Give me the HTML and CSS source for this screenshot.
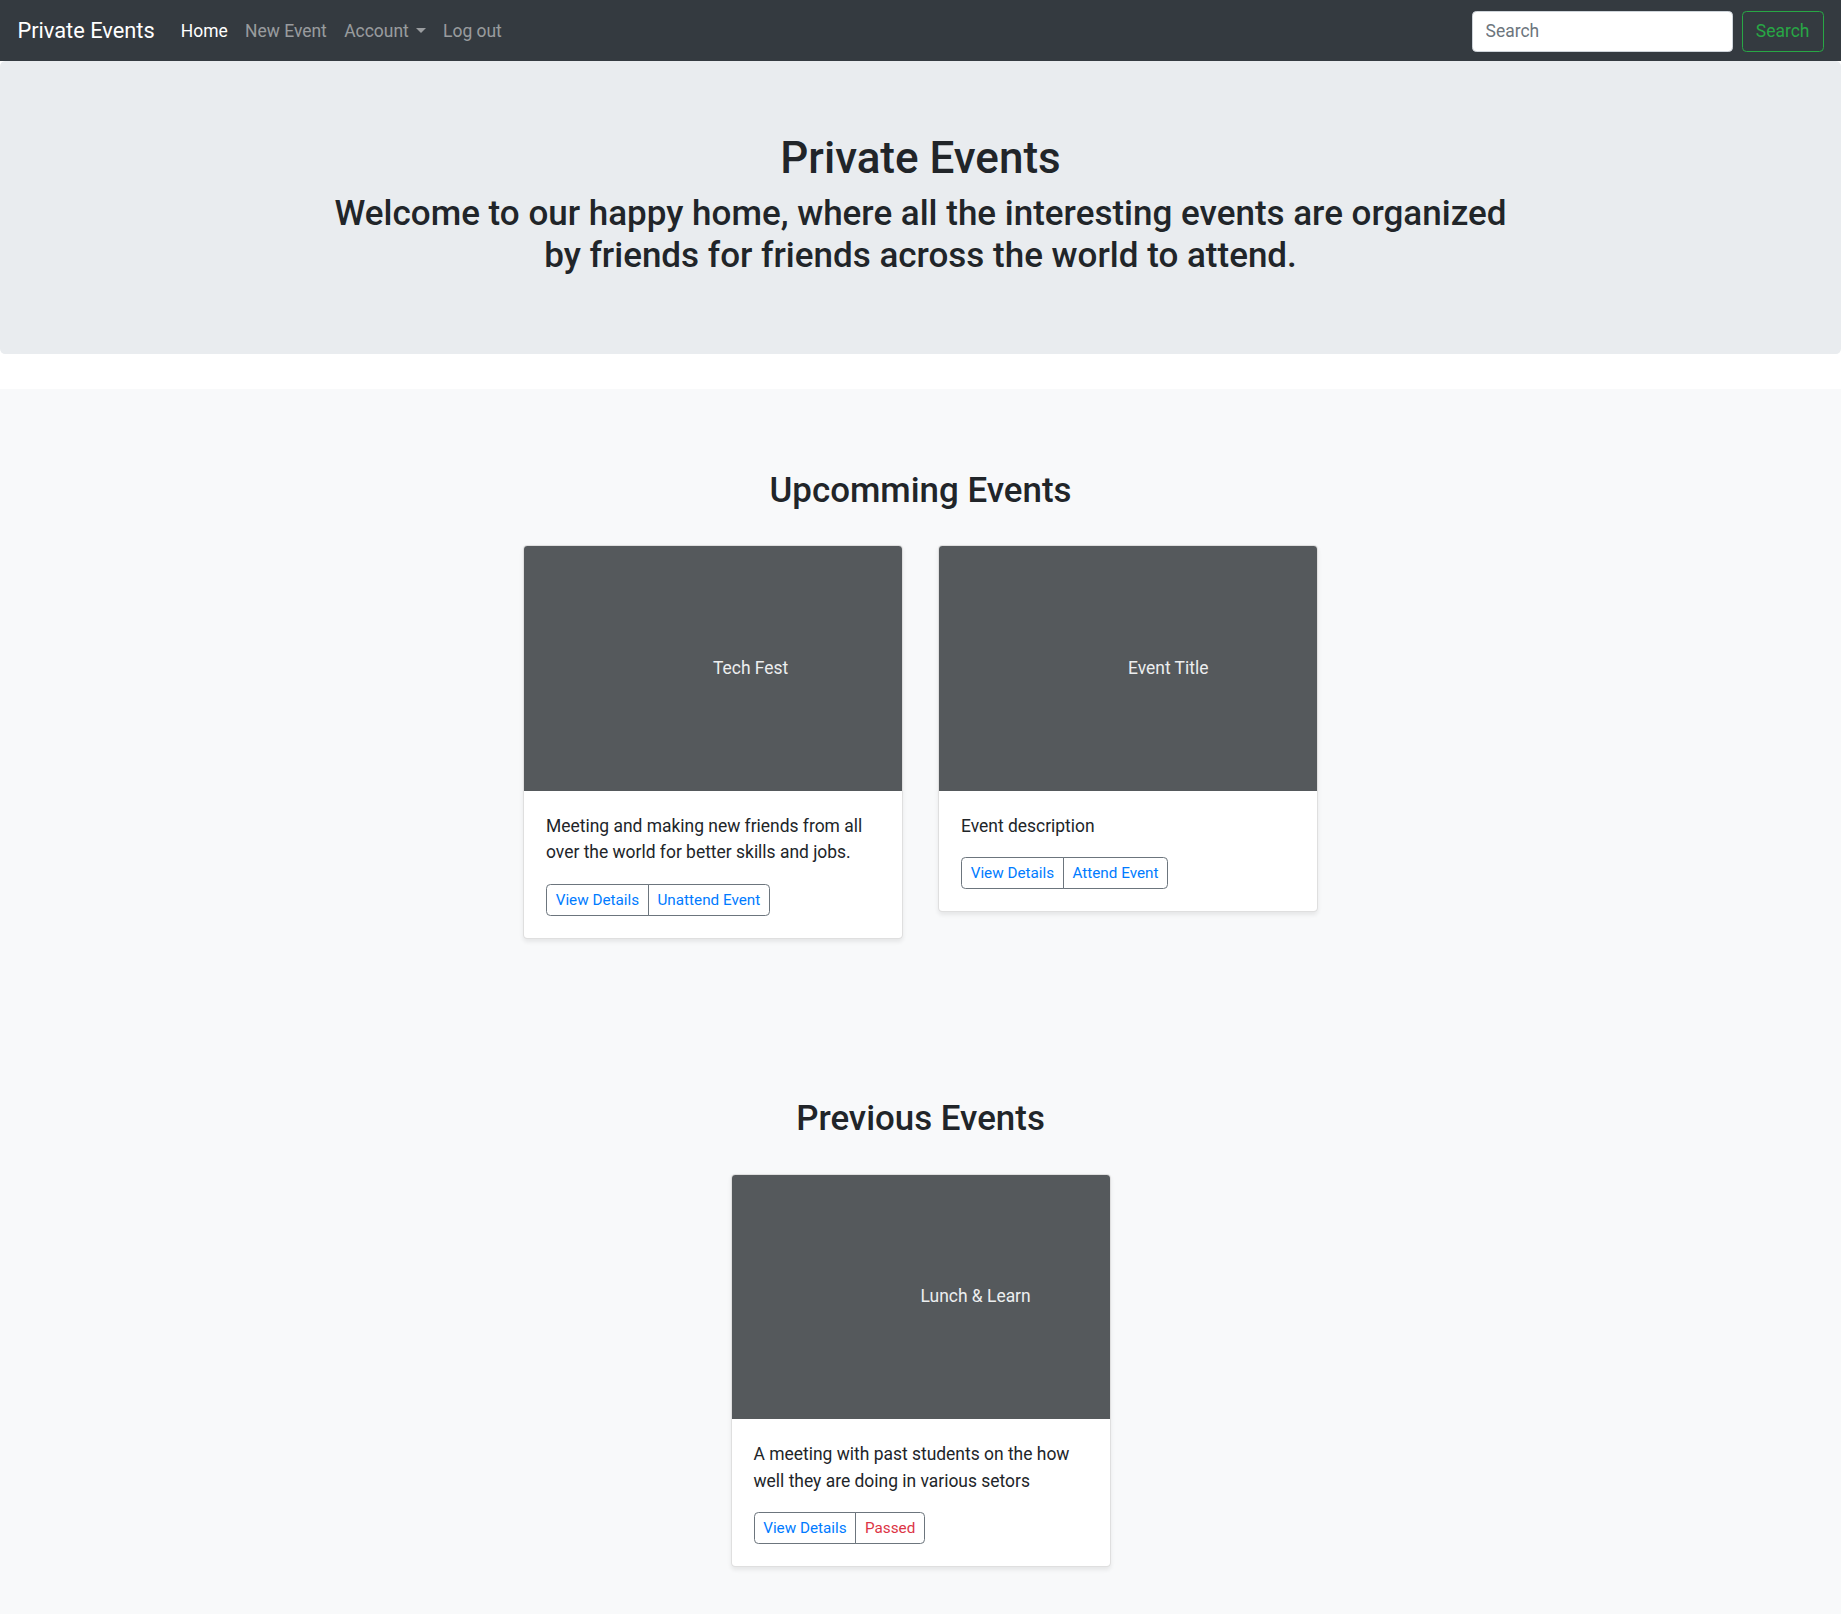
FILE: index.html
```html
<!DOCTYPE html>
<html lang="en">
<head>
<meta charset="utf-8">
<title>Private Events</title>
<link rel="stylesheet" href="styles.css">
</head>
<body>
<nav class="navbar">
  <a class="brand" href="#">Private Events</a>
  <ul class="nav">
    <li><a class="nav-link active" href="#">Home</a></li>
    <li><a class="nav-link" href="#">New Event</a></li>
    <li><a class="nav-link dropdown" href="#">Account</a></li>
    <li><a class="nav-link" href="#">Log out</a></li>
  </ul>
  <form class="search">
    <input class="search-input" type="search" placeholder="Search">
    <button class="search-btn" type="button">Search</button>
  </form>
</nav>

<header class="jumbotron">
  <h1 class="jumbo-title">Private Events</h1>
  <h2 class="jumbo-lead">Welcome to our happy home, where all the interesting events are organized by friends for friends across the world to attend.</h2>
</header>

<main class="album">
  <section class="events">
    <h2 class="section-title">Upcomming Events</h2>
    <div class="cards">
      <div class="card">
        <div class="card-img"><span>Tech Fest</span></div>
        <div class="card-body">
          <p class="card-text">Meeting and making new friends from all over the world for better skills and jobs.</p>
          <div class="btn-group">
            <a class="btn" href="#">View Details</a>
            <a class="btn" href="#">Unattend Event</a>
          </div>
        </div>
      </div>
      <div class="card">
        <div class="card-img"><span>Event Title</span></div>
        <div class="card-body">
          <p class="card-text">Event description</p>
          <div class="btn-group">
            <a class="btn" href="#">View Details</a>
            <a class="btn" href="#">Attend Event</a>
          </div>
        </div>
      </div>
    </div>
  </section>

  <section class="events">
    <h2 class="section-title">Previous Events</h2>
    <div class="cards">
      <div class="card">
        <div class="card-img"><span>Lunch &amp; Learn</span></div>
        <div class="card-body">
          <p class="card-text">A meeting with past students on the how well they are doing in various setors</p>
          <div class="btn-group">
            <a class="btn" href="#">View Details</a>
            <a class="btn btn-danger" href="#">Passed</a>
          </div>
        </div>
      </div>
    </div>
  </section>
</main>
</body>
</html>
```

FILE: styles.css
```css
* { box-sizing: border-box; }

html, body {
  margin: 0;
  padding: 0;
}

body {
  font-family: Roboto, "Liberation Sans", Arial, sans-serif;
  font-size: 17.44px;
  line-height: 1.5;
  color: #212529;
  background: #fff;
}

a { text-decoration: none; }

/* Navbar */
.navbar {
  display: flex;
  align-items: center;
  height: 61px;
  padding: 9.5px 17.4px 8px;
  background: #343a40;
}

.brand {
  color: #fff;
  font-size: 21.8px;
  line-height: 32.7px;
  padding: 5.4px 0;
  margin-right: 17.4px;
}

.nav {
  display: flex;
  list-style: none;
  margin: 0;
  padding: 0;
  flex: 1;
}

.nav-link {
  display: block;
  padding: 8.7px;
  color: rgba(255, 255, 255, 0.5);
  line-height: 26.2px;
}

.nav-link.active { color: #fff; }

.dropdown::after {
  content: "";
  display: inline-block;
  margin-left: 7px;
  vertical-align: 0.255em;
  border-top: 0.3em solid;
  border-right: 0.3em solid transparent;
  border-left: 0.3em solid transparent;
  border-bottom: 0;
}

.search {
  display: flex;
  align-items: center;
}

.search-input {
  width: 261px;
  height: 41px;
  padding: 6.5px 13px;
  margin-right: 9px;
  font-family: inherit;
  font-size: 17.44px;
  color: #495057;
  background: #fff;
  border: 1px solid #ced4da;
  border-radius: 4.4px;
  outline: none;
}

.search-input::placeholder { color: #6c757d; }

.search-btn {
  height: 41px;
  width: 82px;
  padding: 0;
  font-family: inherit;
  font-size: 17.44px;
  color: #28a745;
  background: transparent;
  border: 1px solid #28a745;
  border-radius: 4.4px;
}

/* Jumbotron */
.jumbotron {
  background: #e9ecef;
  border-radius: 5.2px;
  padding: 71px 32px 69.8px;
  margin-bottom: 34.9px;
  text-align: center;
}

.jumbo-title {
  margin: 0 0 8.7px;
  font-size: 44px;
  line-height: 52.8px;
  font-weight: 500;
}

.jumbo-lead {
  max-width: 1200px;
  margin: 0 auto 6.5px;
  font-size: 35px;
  line-height: 42px;
  font-weight: 500;
}

/* Album */
.album {
  background: #f8f9fa;
}

.events {
  padding: 52.3px 0;
}

.section-title {
  margin: 29px 0 33.5px;
  text-align: center;
  font-size: 34.88px;
  line-height: 41.86px;
  font-weight: 500;
}

.cards {
  display: flex;
  justify-content: center;
  align-items: flex-start;
  gap: 35px;
}

.card {
  width: 380px;
  margin-bottom: 26.2px;
  background: #fff;
  border: 1px solid rgba(0, 0, 0, 0.125);
  border-radius: 4.4px;
  box-shadow: 0 2.2px 4.4px rgba(0, 0, 0, 0.075);
  overflow: hidden;
}

.card-img {
  height: 244.5px;
  display: flex;
  align-items: center;
  padding-left: 50%;
  background: #55595c;
  color: #eceeef;
  font-size: 17.44px;
  white-space: nowrap;
}

.card-img span { margin-top: -1px; }

.card-body {
  padding: 22px;
}

.card-text {
  margin: 0 0 17.6px;
  line-height: 26.6px;
}

.btn-group {
  display: inline-flex;
}

.btn {
  display: block;
  height: 32px;
  padding: 0 8.7px;
  font-size: 15.26px;
  line-height: 30px;
  color: #007bff;
  border: 1px solid #6c757d;
  background: transparent;
}

.btn:first-child {
  border-radius: 4.4px 0 0 4.4px;
}

.btn + .btn {
  margin-left: -1px;
  border-radius: 0 4.4px 4.4px 0;
}

.btn-danger { color: #dc3545; }
```
